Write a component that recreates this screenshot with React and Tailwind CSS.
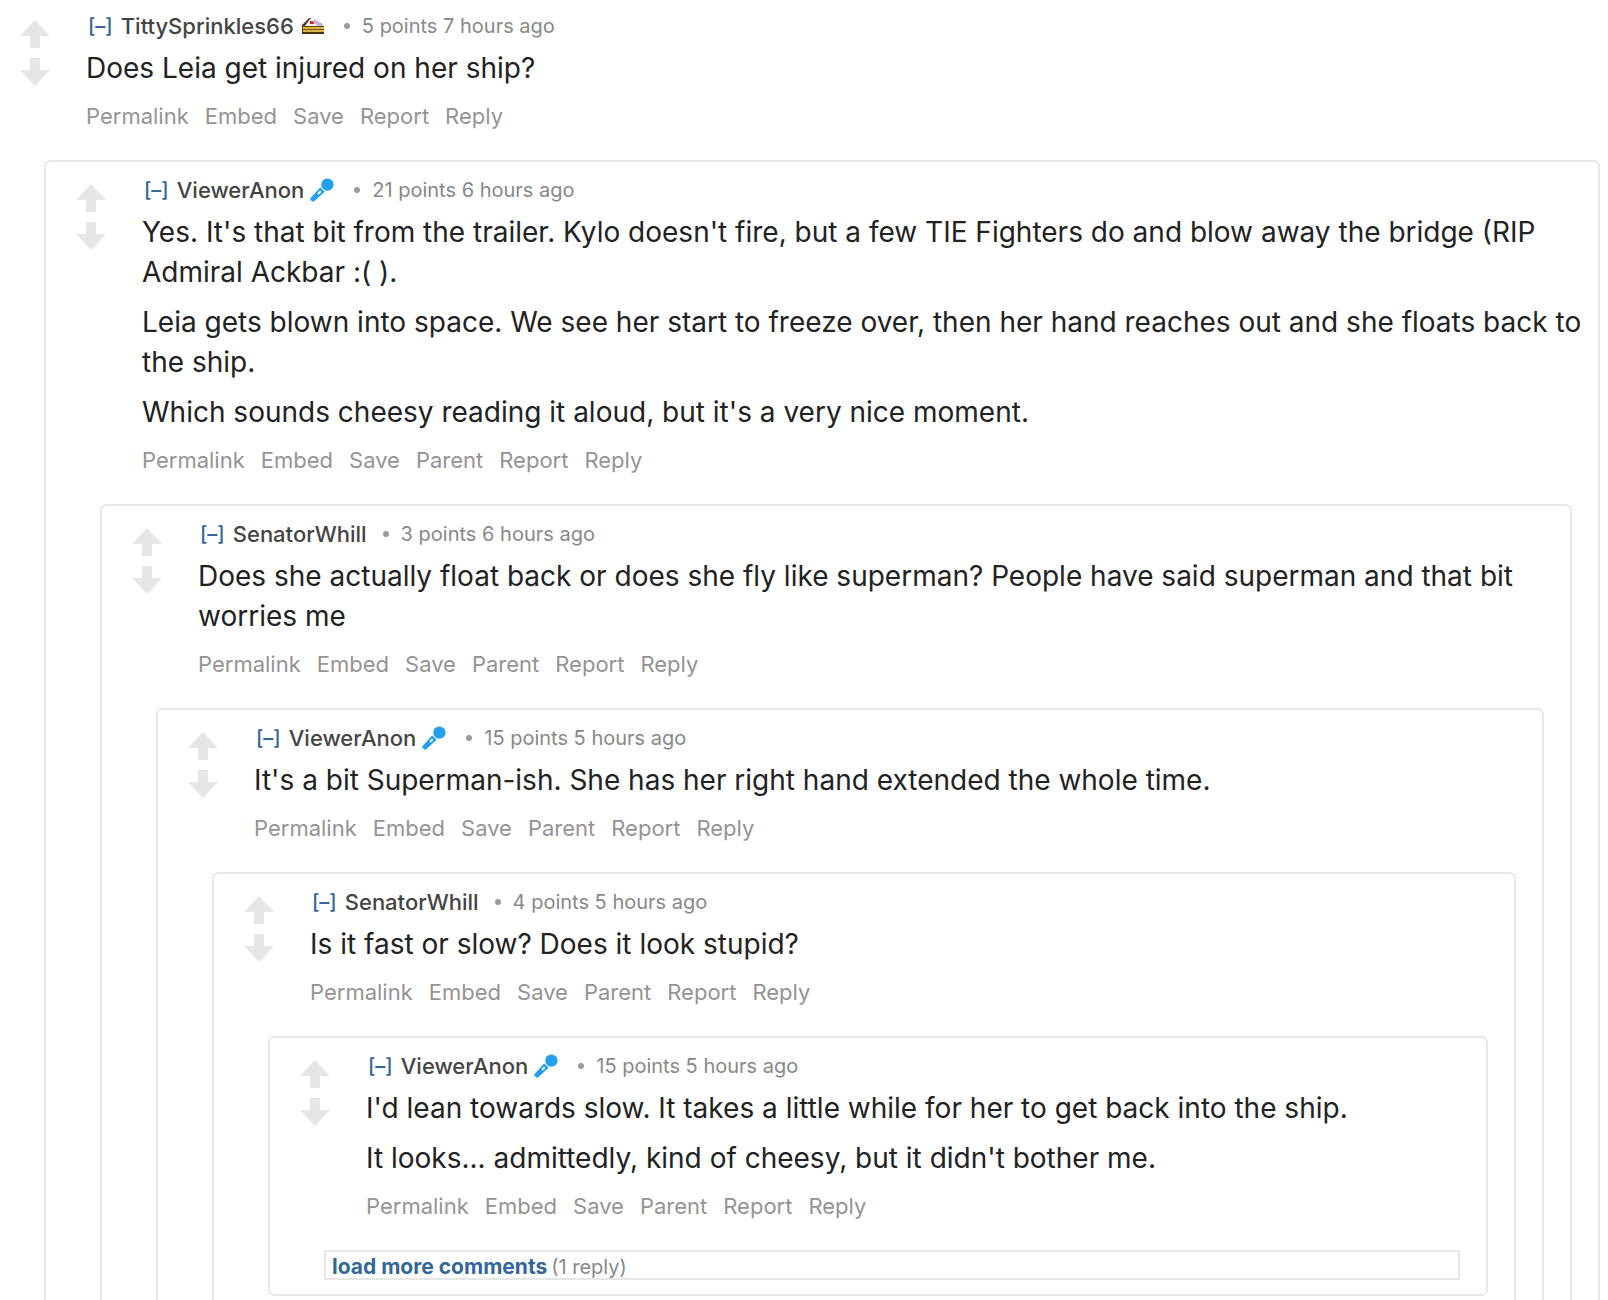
import React from 'react';

const thread = {
  author: 'TittySprinkles66',
  badge: 'cake',
  points: 5,
  age: '7 hours ago',
  body: ['Does Leia get injured on her ship?'],
  reply: {
    author: 'ViewerAnon',
    badge: 'mic',
    points: 21,
    age: '6 hours ago',
    body: [
      "Yes. It's that bit from the trailer. Kylo doesn't fire, but a few TIE Fighters do and blow away the bridge (RIP Admiral Ackbar :( ).",
      'Leia gets blown into space. We see her start to freeze over, then her hand reaches out and she floats back to the ship.',
      "Which sounds cheesy reading it aloud, but it's a very nice moment.",
    ],
    reply: {
      author: 'SenatorWhill',
      points: 3,
      age: '6 hours ago',
      body: [
        'Does she actually float back or does she fly like superman? People have said superman and that bit worries me',
      ],
      reply: {
        author: 'ViewerAnon',
        badge: 'mic',
        points: 15,
        age: '5 hours ago',
        body: ["It's a bit Superman-ish. She has her right hand extended the whole time."],
        reply: {
          author: 'SenatorWhill',
          points: 4,
          age: '5 hours ago',
          body: ['Is it fast or slow? Does it look stupid?'],
          reply: {
            author: 'ViewerAnon',
            badge: 'mic',
            points: 15,
            age: '5 hours ago',
            body: [
              "I'd lean towards slow. It takes a little while for her to get back into the ship.",
              "It looks... admittedly, kind of cheesy, but it didn't bother me.",
            ],
            more: 1,
          },
        },
      },
    },
  },
};

function CakeIcon() {
  return (
    <svg viewBox="0 0 22 16" className="w-[22px] h-4 ml-2 shrink-0" aria-label="cake day">
      <path d="M0 7 7 0h2v2L3 8v8H0z" fill="#5a3a22" />
      <path d="M3 8 8 1h4l9 5v2z" fill="#f3f0fb" />
      <path d="M12 1l9 5v2h-5l-4-3z" fill="#b9b6ee" />
      <path d="M1 8h21v8H1z" fill="#dcb548" />
      <path d="M1 8h21v1H1z" fill="#6b4512" />
      <path d="M1 11h21v1H1z" fill="#7a5216" />
      <path d="M0 14h22v2H0z" fill="#4f2e0c" />
      <path d="M8 3h3v1h1v2H8z" fill="#d8262c" />
    </svg>
  );
}

function MicIcon() {
  return (
    <svg viewBox="0 0 24 24" className="w-6 h-6 ml-1.5 shrink-0" aria-label="microphone">
      <circle cx="17.4" cy="6.6" r="6.2" fill="#24a0ed" />
      <path d="M10.2 8.8 15.2 13.8 4.6 23.4a2 2 0 0 1-3.4-.6 2 2 0 0 1-.6-3.4z" fill="#24a0ed" stroke="#fff" strokeWidth="1" />
      <path d="m10 12.6 1.4 1.4-2.6 2.6-1.4-1.4z" fill="#fff" />
    </svg>
  );
}

function Votes() {
  return (
    <div className="flex flex-col gap-2.5 w-[30px] shrink-0 pt-2.5">
      <button aria-label="upvote" className="block">
        <svg viewBox="0 0 30 28" className="w-[30px] h-7" fill="#e6e6e6">
          <path d="M15 0 30 16H20v12H10V16H0z" />
        </svg>
      </button>
      <button aria-label="downvote" className="block">
        <svg viewBox="0 0 30 28" className="w-[30px] h-7" fill="#e6e6e6">
          <path d="M10 0h10v12h10L15 28 0 12h10z" />
        </svg>
      </button>
    </div>
  );
}

function Comment({ comment, root }) {
  const links = ['Permalink', 'Embed', 'Save', ...(root ? [] : ['Parent']), 'Report', 'Reply'];

  return (
    <article className={root ? 'flex gap-9 pl-5' : 'flex gap-9 pl-[30px]'}>
      <Votes />
      <div className="min-w-0 flex-1">
        <header className="flex items-center h-8 pl-0.5 text-xl text-[#888888] whitespace-nowrap">
          <button className="font-medium text-[#336699] mr-2" aria-label="collapse">[–]</button>
          <a href="#user" className="text-[22px] font-medium text-[#444444]">{comment.author}</a>
          {comment.badge === 'cake' && <CakeIcon />}
          {comment.badge === 'mic' && <MicIcon />}
          <span
            className={`w-1.5 h-1.5 rounded-full bg-[#999999] mr-3 ${comment.badge ? 'ml-5' : 'ml-4'}`}
          />
          <span>{comment.points} points {comment.age}</span>
        </header>
        <div className="mt-1.5 space-y-2.5 text-[28px] leading-10 text-[#222222]">
          {comment.body.map((text) => (
            <p key={text}>{text}</p>
          ))}
        </div>
        <nav className="flex gap-4 mt-3 h-8 items-center text-[22px] text-[#949494]">
          {links.map((label) => (
            <a key={label} href={`#${label.toLowerCase()}`}>{label}</a>
          ))}
        </nav>
      </div>
    </article>
  );
}

// A comment followed by its replies, each level boxed inside the one above
function Branch({ comment, root = false }) {
  return (
    <>
      <Comment comment={comment} root={root} />
      {comment.reply && (
        <section
          className={`mt-7 border-2 border-[#e6e6e6] rounded-md pt-3 pb-3.5 ${root ? 'ml-11 mr-2' : 'ml-[54px] mr-[26px]'}`}
        >
          <Branch comment={comment.reply} />
        </section>
      )}
      {comment.more && (
        <div className="mt-7 ml-[54px] mr-[26px] h-[30px] flex items-center gap-1 px-1.5 pt-1 border-2 border-[#e6e6e6] text-xl text-[#888888]">
          <button className="text-[21px] font-bold text-[#336699]">load more comments</button>
          <span>({comment.more} reply)</span>
        </div>
      )}
    </>
  );
}

export default function App() {
  return (
    <main className="h-screen overflow-hidden bg-white pt-2.5 font-['Inter',sans-serif]">
      <Branch comment={thread} root />
    </main>
  );
}
